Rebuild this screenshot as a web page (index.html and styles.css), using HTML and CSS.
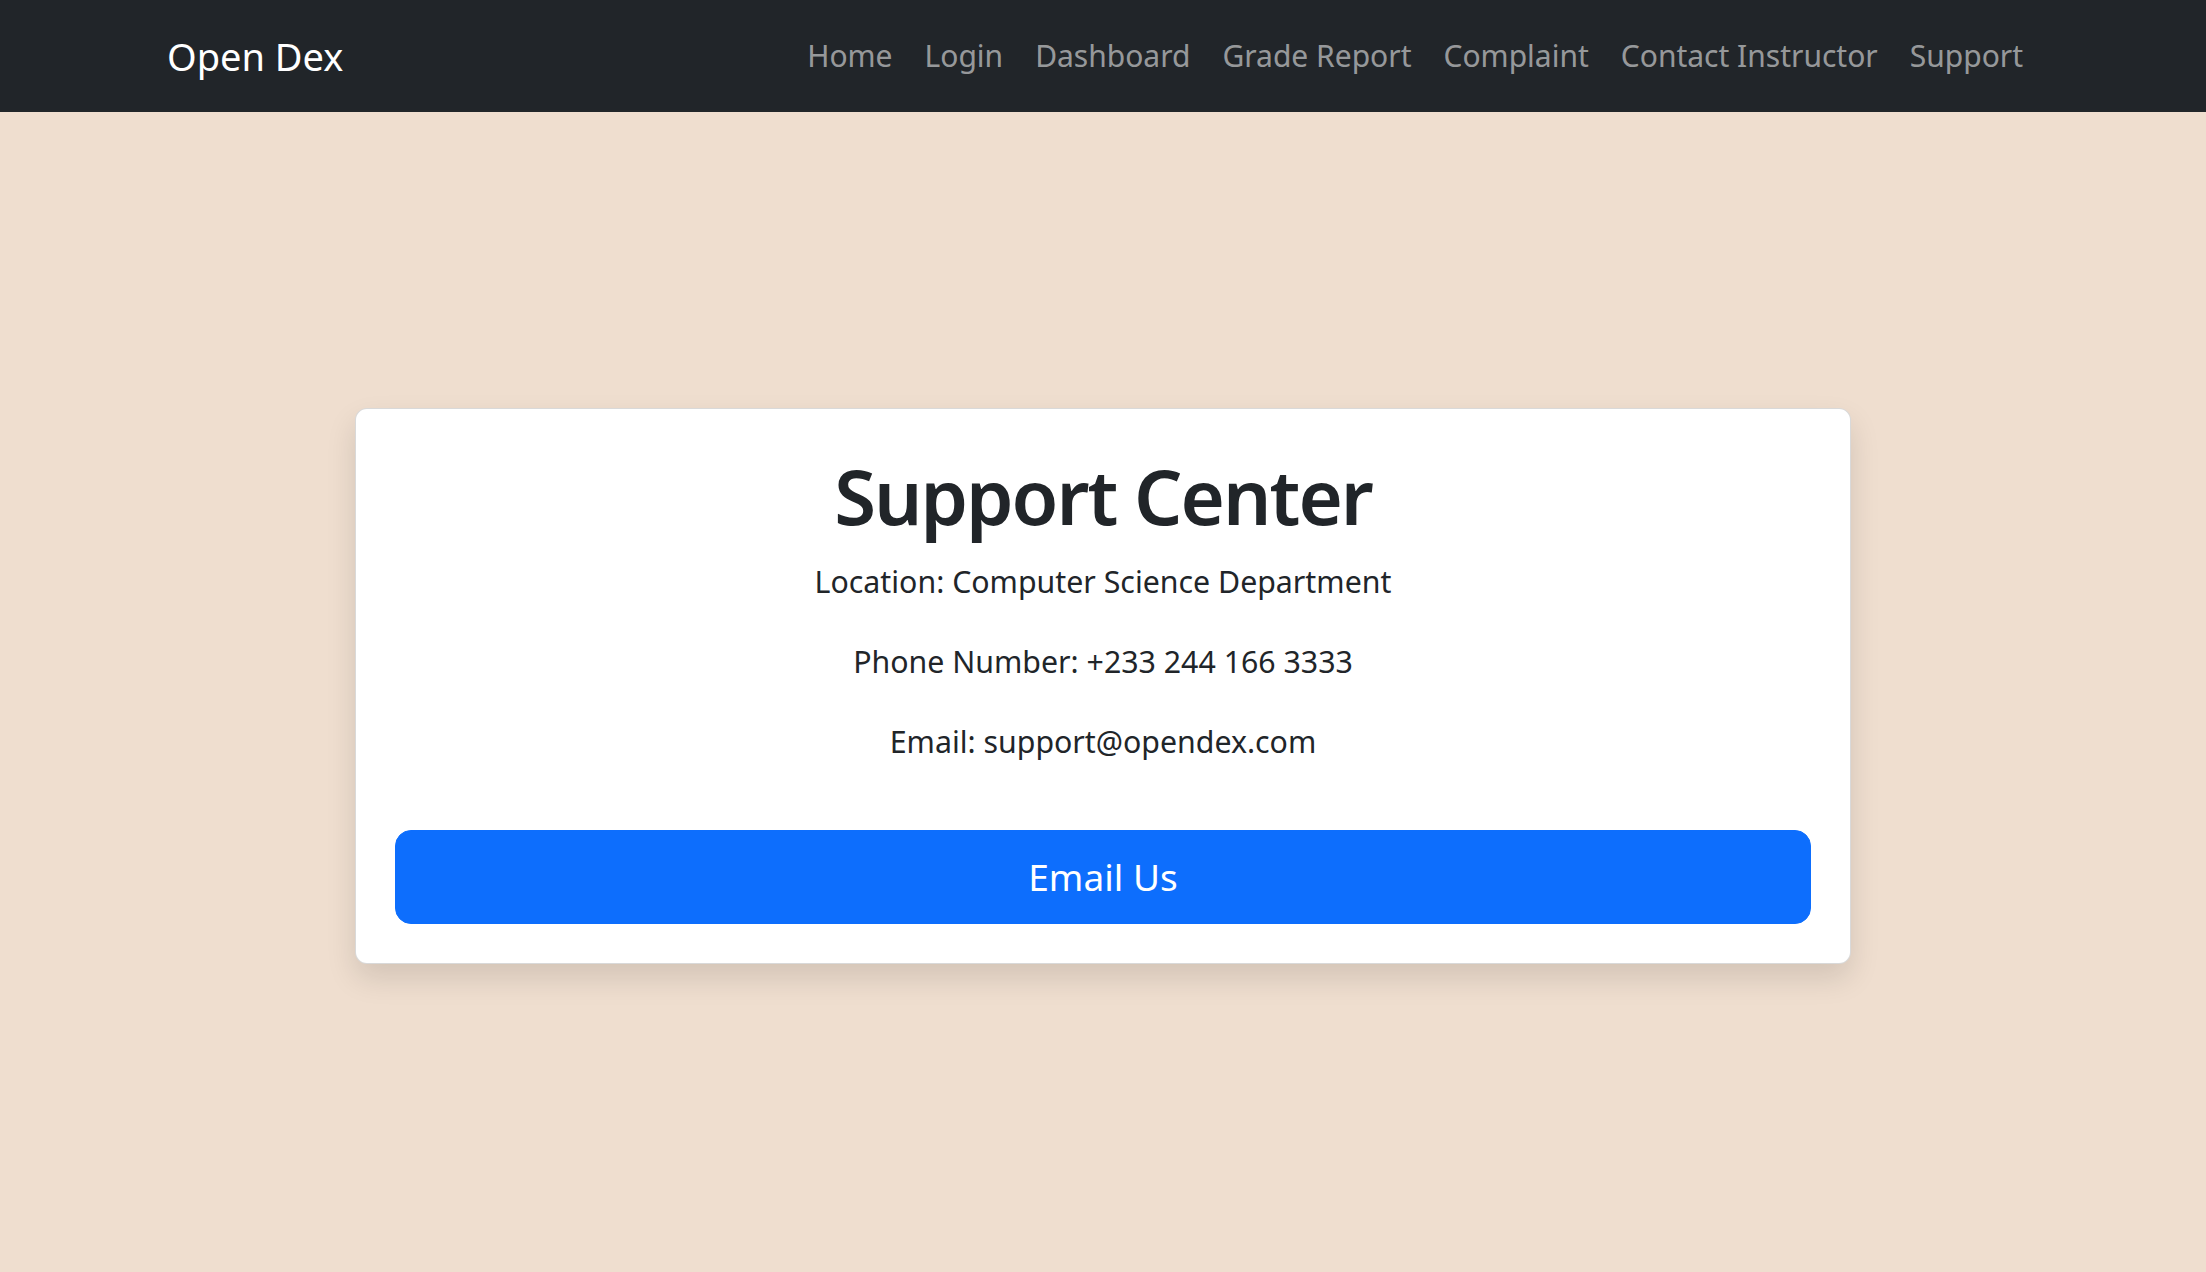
FILE: index.html
```html
<!DOCTYPE html>
<html lang="en">
<head>
<meta charset="utf-8">
<title>Support Center - Open Dex</title>
<link rel="stylesheet" href="styles.css">
</head>
<body>
<nav class="navbar">
  <div class="nav-container">
    <a class="brand" href="#">Open Dex</a>
    <ul class="nav-links">
      <li><a href="#">Home</a></li>
      <li><a href="#">Login</a></li>
      <li><a href="#">Dashboard</a></li>
      <li><a href="#">Grade Report</a></li>
      <li><a href="#">Complaint</a></li>
      <li><a href="#">Contact Instructor</a></li>
      <li><a href="#">Support</a></li>
    </ul>
  </div>
</nav>
<main class="main">
  <section class="card">
    <h1 class="title">Support Center</h1>
    <p class="info">Location: Computer Science Department</p>
    <p class="info">Phone Number: +233 244 166 3333</p>
    <p class="info">Email: support@opendex.com</p>
    <a class="btn" href="#">Email Us</a>
  </section>
</main>
</body>
</html>
```
FILE: styles.css
```css
* { box-sizing: border-box; }
html, body { margin: 0; padding: 0; }
body {
  background: #efdecf;
  font-family: "Noto Sans", "Open Sans", sans-serif;
  color: #212529;
  min-height: 100vh;
}
.navbar {
  background: #212529;
  padding: 16px 0;
}
.nav-container {
  width: 1920px;
  margin: 0 auto;
  padding: 0 24px;
  display: flex;
  align-items: center;
  justify-content: space-between;
}
.brand {
  color: #fff;
  text-decoration: none;
  font-size: 38px;
  line-height: 60px;
  padding: 10px 0;
}
.nav-links {
  list-style: none;
  margin: 0;
  padding: 0;
  display: flex;
}
.nav-links a {
  display: block;
  color: rgba(255, 255, 255, 0.55);
  text-decoration: none;
  font-size: 30px;
  line-height: 48px;
  padding: 16px 16px;
}
.main {
  height: calc(100vh - 112px);
  display: flex;
  flex-direction: column;
  justify-content: center;
  align-items: center;
  padding-bottom: 12px;
}
.card {
  width: 1496px;
  background: #fff;
  border: 1px solid rgba(0, 0, 0, 0.15);
  border-radius: 12px;
  padding: 39px;
  box-shadow: 0 14px 30px rgba(0, 0, 0, 0.12);
  text-align: center;
  display: flex;
  flex-direction: column;
}
.title {
  margin: 0 0 14px;
  font-size: 76px;
  line-height: 96px;
  font-weight: 600;
  letter-spacing: -2px;
}
.info {
  margin: 0 0 32px;
  font-size: 30.3px;
  line-height: 48px;
}
.btn {
  margin-top: 32px;
  display: block;
  background: #0d6efd;
  color: #fff;
  text-decoration: none;
  font-size: 37px;
  line-height: 60px;
  padding: 16px 32px;
  border: 1px solid #0d6efd;
  border-radius: 16px;
}
```
